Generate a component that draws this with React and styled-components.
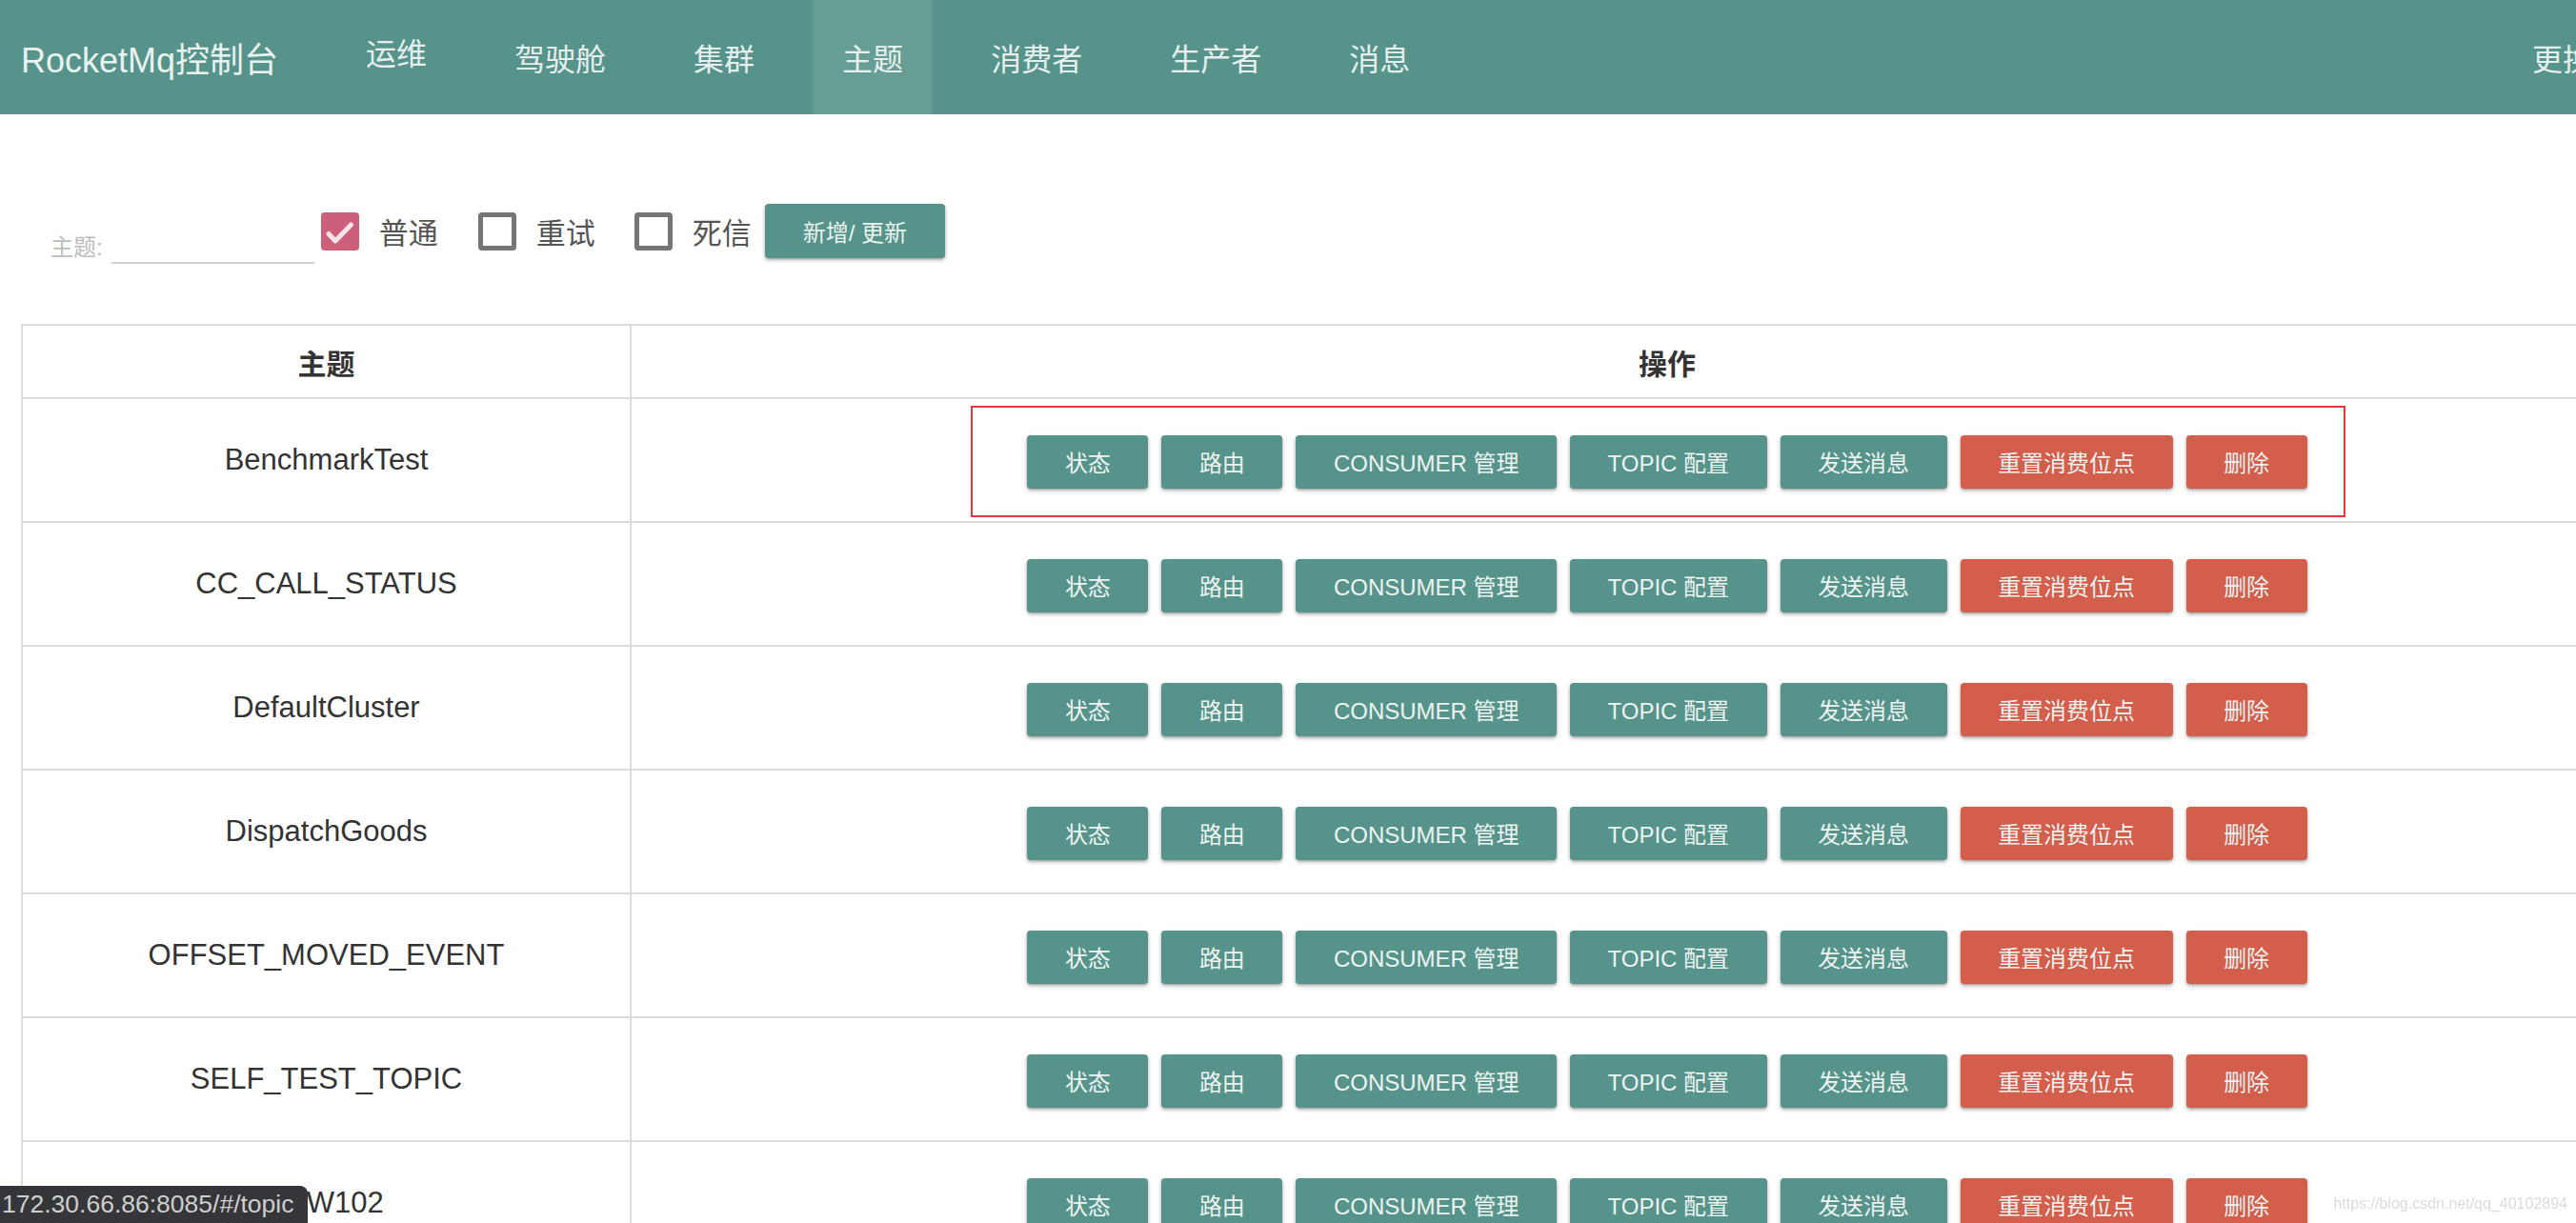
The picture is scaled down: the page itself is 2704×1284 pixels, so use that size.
import React from 'react';
import styled, { createGlobalStyle } from 'styled-components';

const GlobalStyle = createGlobalStyle`
  html, body {
    margin: 0;
    padding: 0;
    overflow: hidden;
    background: #fff;
  }
  body {
    font-family: "Liberation Sans", "Noto Sans CJK SC", Arial, sans-serif;
    color: #333;
  }
`;

const Page = styled.div`
  width: 2862px;
`;

const Navbar = styled.nav`
  display: flex;
  align-items: stretch;
  height: 120px;
  background: #56938a;
  padding-right: 45px;
`;

const Brand = styled.a`
  display: flex;
  align-items: center;
  padding-left: 22px;
  margin-right: 61px;
  font-size: 36px;
  color: #eaf2f0;
  text-decoration: none;
`;

const NavList = styled.ul`
  display: flex;
  gap: 30px;
  margin: 0;
  padding: 0;
  list-style: none;
`;

const NavItem = styled.li`
  display: flex;
  align-items: center;
  padding: 0 31px ${(p) => (p.$raised ? '12px' : '0')};
  font-size: 32px;
  color: #e6efed;
  background: ${(p) => (p.$active ? '#669d94' : 'transparent')};
`;

const NavRight = styled(NavItem)`
  margin-left: auto;
  list-style: none;
`;

const Toolbar = styled.form`
  display: flex;
  align-items: center;
  height: 57px;
  margin-top: 94px;
  padding-left: 53px;
`;

const Field = styled.label`
  display: flex;
  align-items: flex-end;
  align-self: flex-end;
  margin-bottom: -6px;
  margin-right: 7px;
`;

const FieldLabel = styled.span`
  font-size: 24px;
  line-height: 24px;
  color: #bdbdbd;
  margin-bottom: 5px;
`;

const Input = styled.input`
  width: 213px;
  height: 40px;
  margin-left: 9px;
  padding: 0;
  border: none;
  border-bottom: 2px solid #d2d2d2;
  outline: none;
  background: transparent;
  font-size: 24px;
`;

const Check = styled.span`
  display: inline-flex;
  align-items: center;
  margin-right: ${(p) => p.$gap}px;
  font-size: 31px;
  color: #555;
`;

const Box = styled.span`
  display: inline-flex;
  align-items: center;
  justify-content: center;
  box-sizing: border-box;
  width: 40px;
  height: 40px;
  margin-right: 21px;
  border-radius: 4px;
  border: ${(p) => (p.$checked ? 'none' : '5px solid #757575')};
  background: ${(p) => (p.$checked ? '#cc5f7a' : 'transparent')};
`;

const Button = styled.button`
  display: inline-flex;
  align-items: center;
  justify-content: center;
  height: ${(p) => (p.$tall ? 57 : 56)}px;
  padding: 0 ${(p) => (p.$tall ? 40 : 39.5)}px;
  border: none;
  border-radius: 4px;
  background: ${(p) => (p.$danger ? '#d35e4b' : '#56938a')};
  color: #edf3f1;
  font-family: inherit;
  font-size: 24px;
  white-space: nowrap;
  box-shadow: 0 2px 4px rgba(0, 0, 0, 0.3), 0 1px 2px rgba(0, 0, 0, 0.15);
`;

const Table = styled.table`
  margin: 69px 0 0 22px;
  width: 2817px;
  border-collapse: collapse;
  table-layout: fixed;
`;

const Th = styled.th`
  height: 75px;
  border: 2px solid #ddd;
  font-size: 30px;
  font-weight: bold;
  color: #333;
  text-align: center;
  padding: 0;
`;

const Td = styled.td`
  height: 128px;
  border: 2px solid #ddd;
  font-size: 31px;
  color: #333;
  text-align: center;
  padding: 0;
`;

const Actions = styled.div`
  position: relative;
  display: inline-flex;
  gap: 14px;
  margin-top: 3px;
`;

const Highlight = styled.div`
  position: absolute;
  left: -59px;
  right: -40px;
  top: -31px;
  bottom: -30px;
  border: 2px solid #e0393a;
  pointer-events: none;
`;

const StatusTip = styled.div`
  position: fixed;
  left: 0;
  bottom: 0;
  width: 323px;
  height: 39px;
  padding-left: 2px;
  box-sizing: border-box;
  background: #35363a;
  border-top-right-radius: 8px;
  color: #cfcfcf;
  font-size: 26.5px;
  line-height: 39px;
  white-space: nowrap;
  overflow: hidden;
`;

const Watermark = styled.div`
  position: fixed;
  right: 9px;
  bottom: 11px;
  font-size: 16px;
  color: rgba(190, 190, 190, 0.55);
`;

const navItems = ['运维', '驾驶舱', '集群', '主题', '消费者', '生产者', '消息'];

const topics = [
  'BenchmarkTest',
  'CC_CALL_STATUS',
  'DefaultCluster',
  'DispatchGoods',
  'OFFSET_MOVED_EVENT',
  'SELF_TEST_TOPIC',
  'TBW102',
];

const actions = [
  { label: '状态' },
  { label: '路由' },
  { label: 'CONSUMER 管理' },
  { label: 'TOPIC 配置' },
  { label: '发送消息' },
  { label: '重置消费位点', danger: true },
  { label: '删除', danger: true },
];

const CheckMark = () => (
  <svg width="40" height="40" viewBox="0 0 40 40">
    <path d="M8 22.5 L15 30 L31.5 13" fill="none" stroke="#f6e3e8" strokeWidth="5" strokeLinecap="round" strokeLinejoin="round" />
  </svg>
);

const App = () => (
  <Page>
    <GlobalStyle />
    <Navbar>
      <Brand>RocketMq控制台</Brand>
      <NavList>
        {navItems.map((item, i) => (
          <NavItem key={item} $active={item === '主题'} $raised={i === 0}>
            {item}
          </NavItem>
        ))}
      </NavList>
      <NavRight as="div">更换语言</NavRight>
    </Navbar>

    <Toolbar onSubmit={(e) => e.preventDefault()}>
      <Field>
        <FieldLabel>主题:</FieldLabel>
        <Input type="text" />
      </Field>
      <Check $gap={42}>
        <Box $checked>
          <CheckMark />
        </Box>
        普通
      </Check>
      <Check $gap={41}>
        <Box />
        重试
      </Check>
      <Check $gap={14}>
        <Box />
        死信
      </Check>
      <Button type="button" $tall>
        新增/ 更新
      </Button>
    </Toolbar>

    <Table>
      <colgroup>
        <col style={{ width: '639px' }} />
        <col />
      </colgroup>
      <thead>
        <tr>
          <Th>主题</Th>
          <Th>操作</Th>
        </tr>
      </thead>
      <tbody>
        {topics.map((topic, i) => (
          <tr key={topic}>
            <Td>{topic}</Td>
            <Td>
              <Actions>
                {actions.map((a) => (
                  <Button key={a.label} type="button" $danger={a.danger}>
                    {a.label}
                  </Button>
                ))}
                {i === 0 && <Highlight />}
              </Actions>
            </Td>
          </tr>
        ))}
      </tbody>
    </Table>

    <StatusTip>172.30.66.86:8085/#/topic</StatusTip>
    <Watermark>https://blog.csdn.net/qq_40102894</Watermark>
  </Page>
);

export default App;
